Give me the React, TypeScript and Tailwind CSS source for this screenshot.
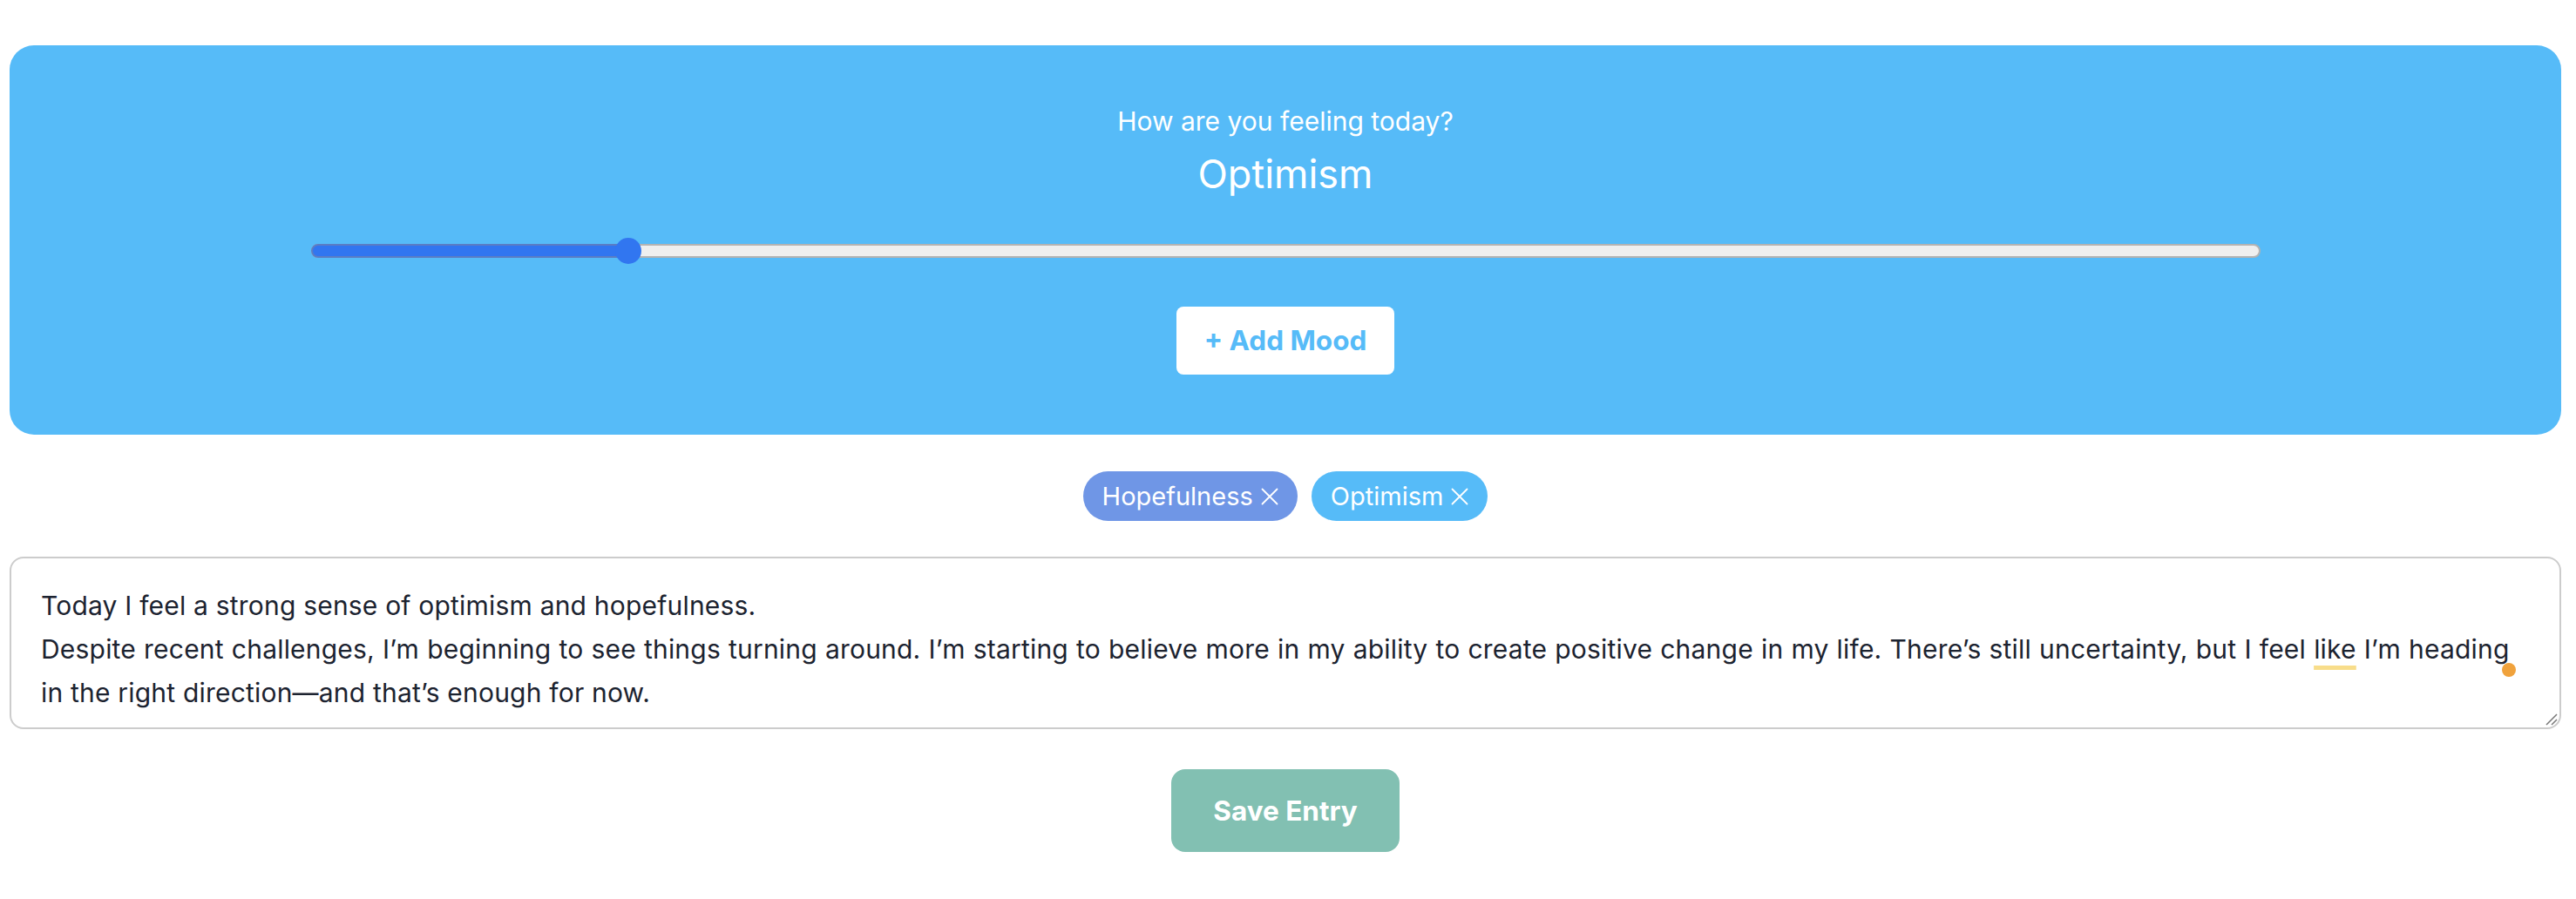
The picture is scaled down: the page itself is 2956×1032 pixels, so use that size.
import { useState } from "react";

const moods = [
  { name: "Hopefulness", color: "bg-[#6f96e6]" },
  { name: "Optimism", color: "bg-[#56bbf8]" },
];

const CloseIcon = () => (
  <svg width="20" height="20" viewBox="0 0 20 20" className="ml-[9px]">
    <path d="M1.5 1.5 L18.5 18.5 M18.5 1.5 L1.5 18.5" stroke="white" strokeWidth="1.8" strokeLinecap="round" />
  </svg>
);

const MoodSlider = () => {
  // thumb sits at ~16% of the track
  return (
    <div className="relative flex h-[30px] w-[2237px] items-center">
      <div className="h-[16px] w-full rounded-full border-2 border-[#b3b3b3] bg-[#efefef]" />
      <div className="absolute left-0 top-[7px] h-[16px] w-[370px] rounded-full border-2 border-[#5b7dc4] bg-[#3176f0]" />
      <div className="absolute left-[349px] top-0 h-[30px] w-[30px] rounded-full bg-[#3176f0]" />
    </div>
  );
};

const App = () => {
  const [selected] = useState(moods);

  return (
    <div className="min-h-screen w-full bg-white pl-[11px] pr-[17px] pt-[52px] font-['Inter','Noto_Sans',sans-serif]">
      <div className="flex w-full flex-col items-center rounded-[28px] bg-[#56bbf8] pt-[69px] pb-[69px] text-white">
        <p className="text-[30px] leading-[36px]">How are you feeling today?</p>
        <h2 className="mt-[15px] text-[45px] leading-[56px]">Optimism</h2>
        <div className="mt-[45px]">
          <MoodSlider />
        </div>
        <button className="mt-[49px] h-[78px] w-[250px] rounded-[8px] bg-white text-[31.5px] font-bold text-[#56bbf8]">
          + Add Mood
        </button>
      </div>

      <div className="mt-[42px] flex justify-center gap-[16px]">
        {selected.map((m) => (
          <span
            key={m.name}
            className={`flex h-[57px] items-center rounded-full pl-[22px] pr-[22px] text-[29px] text-white ${m.color}`}
          >
            {m.name}
            <CloseIcon />
          </span>
        ))}
      </div>

      <div className="relative mt-[41px] h-[198px] w-full rounded-[16px] border-2 border-[#cccccc] px-[34px] pt-[29px] text-[30px] leading-[50px] tracking-[0.2px] text-[#1c2330]">
        <div className="whitespace-nowrap">Today I feel a strong sense of optimism and hopefulness.</div>
        <div className="whitespace-nowrap [word-spacing:0.45px]">
          Despite recent challenges, I’m beginning to see things turning around. I’m starting to believe more in my ability to create positive change in my life. There’s still uncertainty, but I feel{" "}
          <span className="underline decoration-[#f8dd8a] decoration-[5px] underline-offset-[8px]">like</span> I’m heading
        </div>
        <div className="whitespace-nowrap">in the right direction—and that’s enough for now.</div>
        <span className="absolute right-[50px] top-[120px] h-[16px] w-[16px] rounded-full bg-[#f0a23c]" />
        <svg width="16" height="16" viewBox="0 0 16 16" className="absolute bottom-[2px] right-[2px]">
          <path d="M15 3 L3 15 M15 9 L9 15" stroke="#777" strokeWidth="1.5" />
        </svg>
      </div>

      <div className="mt-[46px] flex justify-center">
        <button className="h-[95px] w-[262px] rounded-[16px] bg-[#82c0b2] text-[31.5px] font-bold text-white">
          Save Entry
        </button>
      </div>
    </div>
  );
};

export default App;
